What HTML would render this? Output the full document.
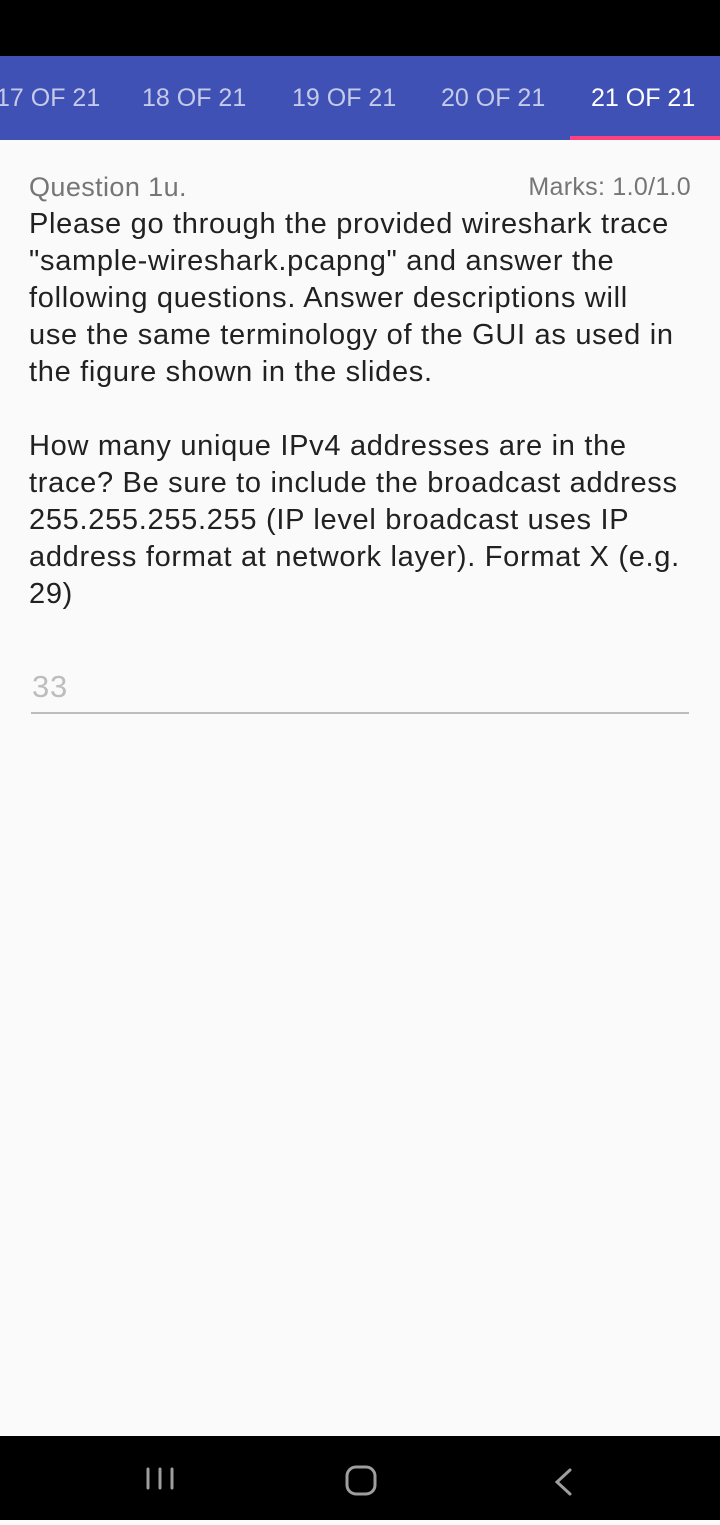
<!DOCTYPE html>
<html><head><style>
body{margin:0;width:720px;height:1520px;background:#fafafa;font-family:"Liberation Sans",sans-serif;position:relative;overflow:hidden}
.sb{position:absolute;top:0;left:0;width:720px;height:56px;background:#000}
.tabs{position:absolute;top:56px;left:0;width:720px;height:84px;background:#3f51b5}
.tab{position:absolute;top:28px;font-size:25px;color:#c5cae9;white-space:nowrap;font-weight:500}
.ind{position:absolute;left:570px;top:80px;width:150px;height:4px;background:#ff4081}
.t{position:absolute;left:29px;font-size:29px;letter-spacing:0.7px;color:#212121;white-space:nowrap;line-height:37px}
.nav{position:absolute;top:1436px;left:0;width:720px;height:84px;background:#000}
</style></head><body>
<div class="sb"></div>
<div class="tabs">
<div class="tab" style="left:-4px">17 OF 21</div>
<div class="tab" style="left:142px">18 OF 21</div>
<div class="tab" style="left:292px">19 OF 21</div>
<div class="tab" style="left:441px">20 OF 21</div>
<div class="tab" style="left:591px;color:#fff">21 OF 21</div>
<div class="ind"></div>
</div>
<div class="t" style="top:169px;color:#757575;font-size:27px;letter-spacing:0.4px">Question 1u.</div>
<div class="t" style="top:169px;left:auto;right:29px;color:#757575;font-size:25px;letter-spacing:0.3px">Marks: 1.0/1.0</div>
<div class="t" style="top:206px">Please go through the provided wireshark trace<br>"sample-wireshark.pcapng" and answer the<br>following questions. Answer descriptions will<br>use the same terminology of the GUI as used in<br>the figure shown in the slides.<br><br>How many unique IPv4 addresses are in the<br>trace? Be sure to include the broadcast address<br>255.255.255.255 (IP level broadcast uses IP<br>address format at network layer). Format X (e.g.<br>29)</div>
<div class="t" style="top:668px;left:32px;color:#bdbdbd;font-size:31px">33</div>
<div style="position:absolute;left:31px;top:712px;width:658px;height:2px;background:#bdbdbd"></div>
<div class="nav">
<svg width="720" height="84">
<g stroke="#9e9e9e" stroke-width="3" fill="none" stroke-linecap="round">
<path d="M148 33V52M160 33V52M172 33V52"/>
<rect x="347" y="31" width="28" height="27" rx="9"/>
<path d="M570 34L557 46L570 58"/>
</g></svg>
</div>
</body></html>
